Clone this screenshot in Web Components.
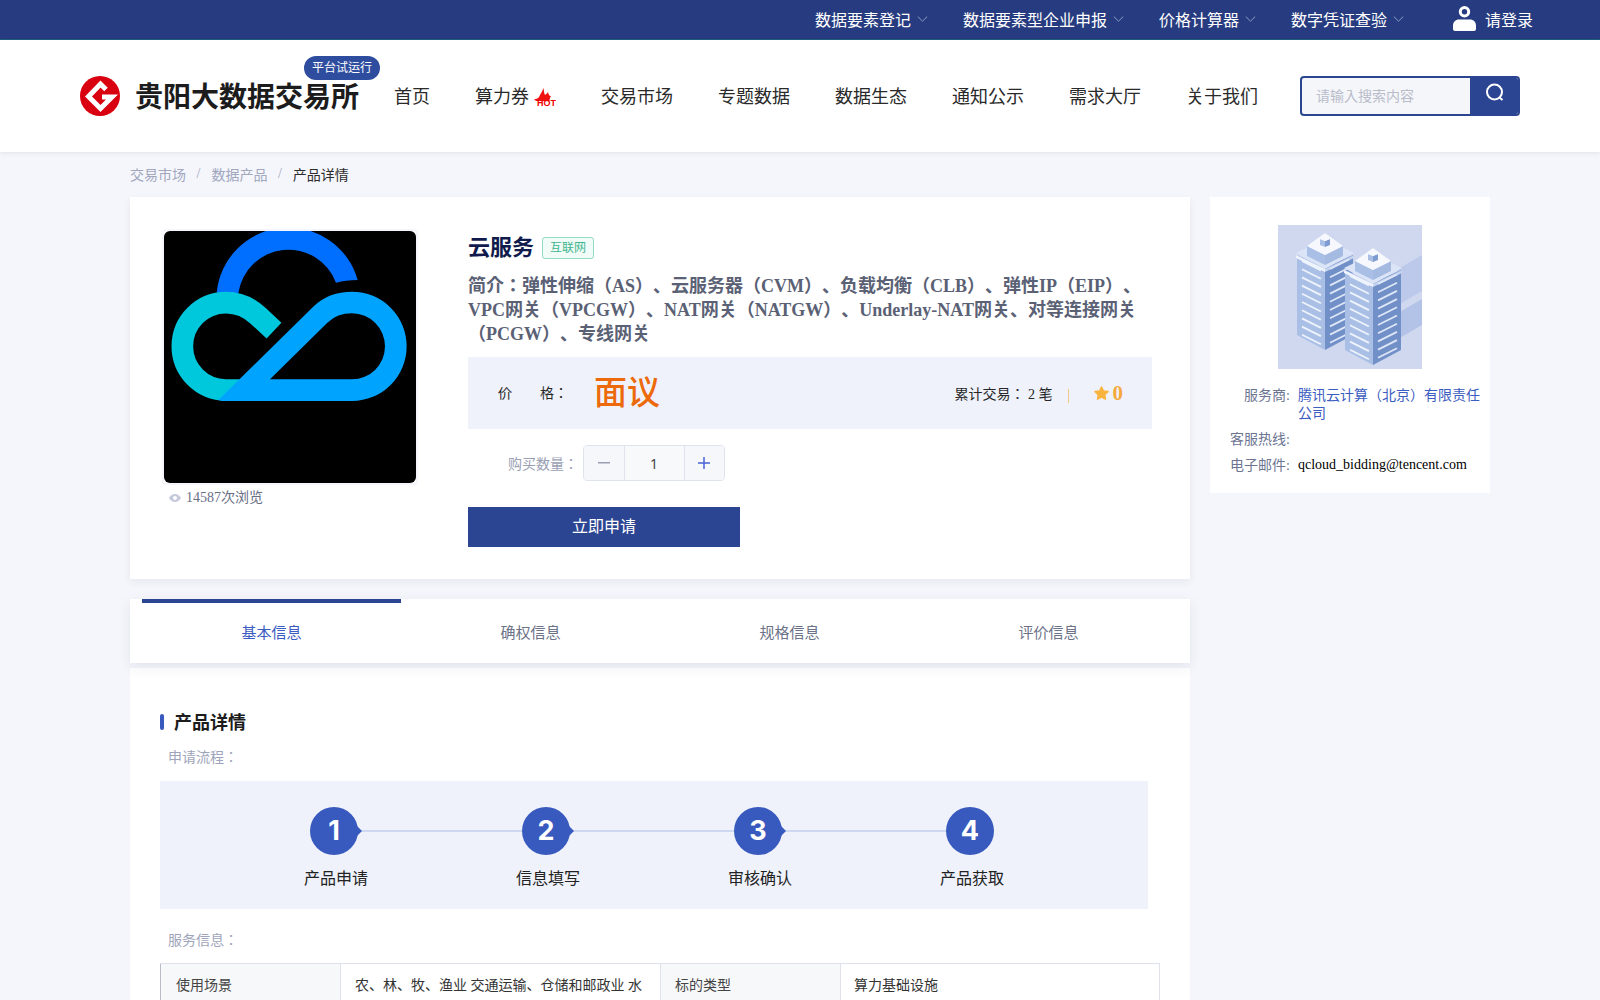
<!DOCTYPE html>
<html>
<head>
<meta charset="utf-8">
<title>云服务 - 贵阳大数据交易所</title>
<style>
  html, body { margin: 0; padding: 0; background: #f5f6fb; }
  body { font-family: "Liberation Serif", "Noto Sans CJK JP", serif; text-spacing-trim: space-all; height: 1000px; overflow: hidden; }
</style>
</head>
<body>
<gy-topbar>
  <gy-toplink>数据要素登记</gy-toplink>
  <gy-toplink>数据要素型企业申报</gy-toplink>
  <gy-toplink>价格计算器</gy-toplink>
  <gy-toplink>数字凭证查验</gy-toplink>
</gy-topbar>
<gy-header></gy-header>
<gy-crumbs></gy-crumbs>
<gy-main>
  <gy-product slot="left"></gy-product>
  <gy-tabs slot="left"></gy-tabs>
  <gy-detail slot="left"></gy-detail>
  <gy-seller slot="right"></gy-seller>
</gy-main>

<script>
(function(){

  // every element gets the same small setup
  function define(name, html){
    customElements.define(name, class extends HTMLElement{
      constructor(){
        super();
        this.attachShadow({ mode: "open" }).innerHTML = html;
      }
    });
  }

  const chevron = `<svg width="11" height="6" viewBox="0 0 11 6" fill="none" stroke="#8f9cc4" stroke-width="1"><path d="M.8.6l4.7 4.6L10.2.6"/></svg>`;

  define("gy-toplink", `
    <style>
      :host{display:flex;align-items:center;gap:6px;font-size:16px;color:#fff;white-space:nowrap}
    </style>
    <slot></slot>${chevron}
  `);

  define("gy-topbar", `
    <style>
      :host{display:flex;justify-content:flex-end;align-items:center;height:37px;box-sizing:content-box;
        background:#273c80;border-bottom:1px solid #1f5f7e;padding:0 67px 2px 0}
      .links{display:flex;gap:35px}
      .login{display:flex;align-items:center;margin-left:49px;gap:9px;color:#fff;font-size:16px}
      svg{display:block}
    </style>
    <div class="links"><slot></slot></div>
    <div class="login">
      <svg width="23" height="25" viewBox="0 0 23 25"><path fill="#fff" fill-rule="evenodd" d="M11.5 0a5.7 5.7 0 1 1 0 11.4a5.7 5.7 0 0 1 0-11.4zm0 3a2.7 2.7 0 1 0 0 5.4a2.7 2.7 0 0 0 0-5.4z"/><path fill="#fff" d="M6 13.5h11c3.4 0 6 2.6 6 6V23a2 2 0 0 1-2 2H2a2 2 0 0 1-2-2v-3.500c0-3.400 2.600-6 6-6z"/></svg>
      <span>请登录</span>
    </div>
  `);

  define("gy-header", `
    <style>
      :host{display:flex;align-items:center;height:112px;background:#fff;padding-left:80px;position:relative;
        box-shadow:0 1px 4px rgba(40,50,100,.1);box-sizing:border-box}
      .logo{display:block;flex:none}
      .name{font-size:28px;font-weight:700;color:#1c1c1c;margin:4px 0 0 15px;white-space:nowrap;position:relative;line-height:40px;width:224px}
      .badge{position:absolute;left:169px;top:-22px;width:76px;height:24px;border-radius:12px;background:#2f4d9e;color:#fff;
        font-size:12px;font-weight:400;line-height:25px;text-align:center}
      nav{display:flex;gap:45px;margin:-2px 0 0 35px;font-size:18px;color:#2a2a2a;white-space:nowrap}
      nav span{display:flex;align-items:center}
      nav svg{margin-left:4px;margin-top:4px}
      .search{display:flex;margin-left:42px;width:220px;height:40px;box-sizing:border-box;border:2px solid #2b4592;border-radius:4px;overflow:hidden;background:#f5f6f9}
      .search .ph{flex:1;padding-left:14px;font-size:14px;line-height:38px;color:#b9bdcb}
      .search .btn{width:48px;background:#2b4592;display:flex;align-items:center;justify-content:center}
      .search .btn svg{margin:0 0 6px 1px}
    </style>
    <svg class="logo" width="40" height="40" viewBox="0 0 40 40">
      <circle cx="20" cy="20" r="20" fill="#d9000f"/>
      <path d="M26 13.500L20.500 8L8.500 20.500L20.500 32.500L32 21H22" fill="none" stroke="#fff" stroke-width="5" stroke-linejoin="miter"/>
    </svg>
    <div class="name">贵阳大数据交易所<span class="badge">平台试运行</span></div>
    <nav>
      <span>首页</span>
      <span>算力券<svg width="23" height="20" viewBox="0 0 23 20">
        <path fill="#f01010" d="M1 12C4 12.500 6 11 7 8C8 6 9.500 4 10.500 1C11 4 11 6 12 8C13.500 7 14.500 6 15 5C15.500 7 16 8.500 18 9.500C17 10.500 16.500 12 16.500 14H3Z"/>
        <text x="4" y="18.500" font-family="Liberation Sans, sans-serif" font-weight="700" font-size="9" fill="#f00000">HOT</text>
      </svg></span>
      <span>交易市场</span>
      <span>专题数据</span>
      <span>数据生态</span>
      <span>通知公示</span>
      <span>需求大厅</span>
      <span>关于我们</span>
    </nav>
    <div class="search">
      <div class="ph">请输入搜索内容</div>
      <div class="btn"><svg width="20" height="20" viewBox="0 0 20 20" fill="none" stroke="#fff" stroke-width="2"><circle cx="9.500" cy="9" r="7.500"/><path d="M14.500 14.500l3 2.500"/></svg></div>
    </div>
  `);

  define("gy-crumbs", `
    <style>
      :host{display:flex;align-items:center;height:43px;padding:0 0 2px 130px;font-size:14px;color:#a0a7bf}
      i{font-style:normal;margin:0 11px 0 10.500px}
      b{font-weight:400;color:#2c2c2c}
    </style>
    <span>交易市场</span><i>/</i><span>数据产品</span><i>/</i><b>产品详情</b>
  `);

  define("gy-main", `
    <style>
      :host{display:flex;gap:20px;padding-left:130px;align-items:flex-start}
      .left{width:1060px;flex:none;display:flex;flex-direction:column}
      .right{width:280px;flex:none}
    </style>
    <div class="left"><slot name="left"></slot></div>
    <div class="right"><slot name="right"></slot></div>
  `);

  define("gy-product", `
    <style>
      :host{display:flex;background:#fff;height:382px;box-sizing:border-box;padding:32px 0 0 32px;box-shadow:0 3px 8px rgba(40,50,100,.07)}
      .pic{width:256px;flex:none}
      .frame{width:252px;height:252px;border:2px solid #f5f6fb;border-radius:4px}
      .frame svg{display:block;border-radius:6px;background:#000}
      .views{display:flex;align-items:center;gap:5px;margin:4px 0 0 7px;font-size:14px;line-height:18px;color:#676d85}
      .info{width:684px;margin-left:50px;margin-top:4px}
      .title{display:flex;align-items:center;height:30px}
      h1{margin:0;font-size:22px;line-height:30px;font-weight:700;color:#101a4c}
      .tag{margin-left:8px;width:52px;height:22px;box-sizing:border-box;border:1px solid #93dcc4;border-radius:3px;background:#f1fbf7;
        color:#3fb68f;font-size:12px;line-height:20px;text-align:center}
      .desc{margin:11px 0 11px;font-size:18px;line-height:24px;font-weight:700;color:#5b6175;width:684px}
      .price{display:flex;align-items:center;height:72px;background:#eff2fb;padding:0 29px 0 30px;font-size:14px;color:#262626}
      .price .lab{width:96px;margin-bottom:2px}
      .price .val{font-size:33px;color:#ed6a0c;font-weight:500;flex:1;margin-bottom:6px}
      .price .sep{width:1px;height:14px;background:#f1c98e;margin:6px 25px 0 15px}
      .score{display:flex;align-items:center;gap:4px;color:#f6a93b;font-size:21px;font-weight:700}
      .qty{display:flex;align-items:center;margin:16px 0 26px 40px;font-size:14px;color:#9a9fb4}
      .stepper{display:flex;width:142px;height:36px;box-sizing:border-box;margin-left:5px;border:1px solid #dfe3ee;border-radius:4px;overflow:hidden;color:#333}
      .stepper div{display:flex;align-items:center;justify-content:center;background:#f6f7fa}
      .stepper .n{width:59px;border:1px solid #dfe3ee;border-width:0 1px;background:#f8f9fb;font-size:14px;font-family:"Noto Sans",sans-serif;color:#444}
      .stepper .b{flex:1}
      .go{width:272px;height:40px;background:#2b4592;color:#fff;font-size:16px;line-height:40px;text-align:center}
    </style>
    <div class="pic">
      <div class="frame">
        <svg width="252" height="252" viewBox="0 0 756 756">
          <path fill="#006eff" d="M158 185A216 216 0 0 1 581 147Q545 147 516 155A152 152 0 0 0 223 187Z"/>
          <path fill="none" stroke="#00c8dc" stroke-width="65" d="M330 299L283 255Q240 215 186 215A131 131 0 0 0 186 477H240"/>
          <path fill="#00a4ff" fill-rule="evenodd" d="M163 507L450 225Q495 182 564 182A164 164 0 0 1 564 510H175ZM318 445L490 275Q520 247 564 247A99 99 0 0 1 564 445Z"/>
        </svg>
      </div>
      <div class="views">
        <svg width="12" height="8" viewBox="0 0 12 8"><path fill="#c5cadb" fill-rule="evenodd" d="M6 0c2.700 0 4.900 1.700 6 4c-1.100 2.300-3.300 4-6 4S1.100 6.300 0 4c1.100-2.300 3.300-4 6-4zm0 2a2 2 0 1 0 0 4a2 2 0 0 0 0-4z"/></svg>
        <span>14587次浏览</span>
      </div>
    </div>
    <div class="info">
      <div class="title"><h1>云服务</h1><span class="tag">互联网</span></div>
      <div class="desc">简介：弹性伸缩（AS）、云服务器（CVM）、负载均衡（CLB）、弹性IP（EIP）、VPC网关（VPCGW）、NAT网关（NATGW）、Underlay-NAT网关、对等连接网关（PCGW）、专线网关</div>
      <div class="price">
        <span class="lab">价&emsp;&emsp;格：</span>
        <span class="val">面议</span>
        <span>累计交易： 2 笔</span>
        <span class="sep"></span>
        <span class="score">
          <svg width="15" height="14" viewBox="0 0 15 14"><path fill="#f9b440" stroke="#f9b440" stroke-linejoin="round" stroke-width="1.500" d="M7.500 1l2 4 4.500.6-3.300 3.100.8 4.400-4-2.100-4 2.100.8-4.400L1 5.600 5.500 5z"/></svg>
          0
        </span>
      </div>
      <div class="qty">
        <span>购买数量：</span>
        <div class="stepper">
          <div class="b"><svg width="12" height="2"><rect width="12" height="1.500" fill="#9aa0b4"/></svg></div>
          <div class="n">1</div>
          <div class="b"><svg width="12" height="12"><path d="M6 0v12M0 6h12" stroke="#4a62d8" stroke-width="1.500"/></svg></div>
        </div>
      </div>
      <div class="go">立即申请</div>
    </div>
  `);

  define("gy-tabs", `
    <style>
      :host{display:flex;margin-top:20px;height:64px;background:#fff;padding-left:12px;box-shadow:0 4px 12px rgba(40,50,100,.09);
        font-size:15px;color:#6c7288;position:relative}
      div{width:259px;height:64px;box-sizing:border-box;padding-top:4px;text-align:center;line-height:60px}
      .on{border-top:4px solid #2b4592;padding-top:0;color:#3b5cc0}
    </style>
    <div class="on">基本信息</div><div>确权信息</div><div>规格信息</div><div>评价信息</div>
  `);

  define("gy-flow-step", `
    <style>
      :host{display:block;width:212px;flex:none}
      .row{display:flex;align-items:center;height:48px}
      .dot{position:relative;width:48px;height:48px;border-radius:50%;background:#3859bd;flex:none;color:#fff;
        font:700 27px/48px Inter,"Liberation Sans",sans-serif;text-align:center}
      .dot::after{content:"";position:absolute;right:-4px;top:19px;border-left:5px solid #3859bd;border-top:5px solid transparent;border-bottom:5px solid transparent}
      .line{flex:1;height:2px;background:#cfd8f1}
      :host([last]) .line, :host([last]) .dot::after{display:none}
      .label{margin:12px 0 0 -6px;font-size:16px;line-height:24px;color:#222;white-space:nowrap}
    </style>
    <div class="row"><div class="dot"><slot name="n"></slot></div><div class="line"></div></div>
    <div class="label"><slot></slot></div>
  `);

  define("gy-detail", `
    <style>
      :host{display:block;margin-top:5px;background:#fff;padding:41px 0 0 30px;height:332px;overflow:hidden;box-sizing:border-box}
      h2{display:flex;align-items:center;margin:0;height:26px;font-size:18px;font-weight:700;color:#1c1c1c}
      h2::before{content:"";width:4px;height:16px;border-radius:2px;background:#3859bd;margin-right:10px}
      h2 span{margin-top:-2px}
      .sub{margin-left:8px;font-size:14px;line-height:22px;color:#9ea4ba}
      .sub.svc{line-height:24px}
      .flow{display:flex;width:988px;height:128px;box-sizing:border-box;padding:26px 0 0 150px;background:#eff2fb;margin:12px 0 20px}
      table{border-collapse:collapse;table-layout:fixed;width:999px;margin-top:10px;font-size:14px;color:#333}
      td{border:1px solid #dfe2ec;padding:13px 14px 15px;line-height:18px;vertical-align:top;white-space:nowrap;overflow:hidden}
      td.k{background:#f7f8fa;color:#444}
      td:first-child{border-left-color:#b9bdc9;padding-left:15px}
      td:last-child{padding-left:13px}
    </style>
    <h2><span>产品详情</span></h2>
    <div class="sub" style="margin-top:12px">申请流程：</div>
    <div class="flow">
      <gy-flow-step><span slot="n">1</span>产品申请</gy-flow-step>
      <gy-flow-step><span slot="n">2</span>信息填写</gy-flow-step>
      <gy-flow-step><span slot="n">3</span>审核确认</gy-flow-step>
      <gy-flow-step last><span slot="n">4</span>产品获取</gy-flow-step>
    </div>
    <div class="sub svc">服务信息：</div>
    <table>
      <colgroup><col style="width:180px"><col style="width:320px"><col style="width:180px"><col style="width:319px"></colgroup>
      <tr><td class="k">使用场景</td><td>农、林、牧、渔业 交通运输、仓储和邮政业 水</td><td class="k">标的类型</td><td>算力基础设施</td></tr>
    </table>
  `);

  // stripes on the two towers
  function stripes(x1, y1, x2, y2, count, step, color){
    let out = "";
    for(let i = 0; i < count; i++){
      out += `<path d="M${x1} ${y1 + i * step}L${x2} ${y2 + i * step}" stroke="${color}" stroke-width="1.800"/>`;
    }
    return out;
  }

  function tower(dx, dy){
    return `<g transform="translate(${dx} ${dy})">
      <path fill="#a9bfe6" d="M19 30L47 43V125L19 110Z"/>
      <path fill="#7290c8" d="M47 43L75 30V110L47 125Z"/>
      <path fill="#dce5f7" d="M18 28L47 14L76 28L47 44Z"/>
      <path fill="#eef3fc" d="M18 30L47 44V47L18 33Z"/>
      <path fill="#c6d4ef" d="M47 44L76 30V33L47 47Z"/>
      <path fill="#a9bfe6" d="M29 21L47 30V40L29 31Z"/>
      <path fill="#7f9cd2" d="M47 30L65 21V31L47 40Z" opacity=".6"/>
      <path fill="#f6f8fe" d="M29 21L47 8L65 21L47 30Z"/>
      <path fill="#a9bfe6" d="M42 14L47 16V22L42 20Z"/>
      <path fill="#7f9cd2" d="M47 16L52 14V20L47 22Z"/>
      <path fill="#f6f8fe" d="M42 14L47 12L52 14L47 16Z"/>
      ${stripes(24, 36, 43, 45.500, 10, 8.200, "#eef3fc")}
      ${stripes(52, 44, 71, 34.500, 10, 8.200, "#dfe7f8")}
    </g>`;
  }

  define("gy-seller", `
    <style>
      :host{display:block;background:#fff;padding:28px 10px 18px 0;box-sizing:border-box;font-size:14px;line-height:18px}
      svg{display:block;margin:0 0 18px 68px}
      .row{display:flex;margin-top:8px;min-height:18px}
      .k{width:80px;flex:none;text-align:right;margin-right:8px;color:#6c7592}
      .v{color:#000}
      .a{color:#3b5cc0}
      .e{margin-top:-1px}
    </style>
    <svg width="144" height="144" viewBox="0 0 144 144">
      <rect width="144" height="144" fill="#d0d8f0"/>
      <path fill="#bcc9ea" d="M120 44L144 30V66L120 80Z"/>
      <path fill="#b3c2e7" d="M120 88L144 74V100L120 114Z"/>
      ${tower(0, 0)}
      ${tower(48, 15)}
    </svg>
    <div class="row"><span class="k">服务商:</span><span class="v a">腾讯云计算（北京）有限责任公司</span></div>
    <div class="row"><span class="k">客服热线:</span><span class="v"></span></div>
    <div class="row"><span class="k">电子邮件:</span><span class="v e">qcloud_bidding@tencent.com</span></div>
  `);

})();
</script>
</body>
</html>
